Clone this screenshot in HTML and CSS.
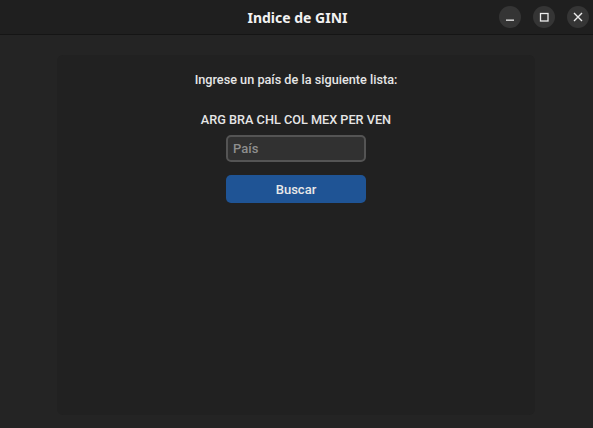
FILE: index.html
```html
<!DOCTYPE html>
<html>
<head>
<meta charset="utf-8">
<link rel="stylesheet" href="styles.css">
</head>
<body>
<div class="window">
  <header class="titlebar">
    <div class="title">Indice de GINI</div>
    <div class="controls">
      <button class="ctl" aria-label="Minimizar">
        <svg width="10" height="10" viewBox="0 0 10 10"><rect x="1" y="7.5" width="8" height="1.3" fill="#ececec"/></svg>
      </button>
      <button class="ctl" aria-label="Maximizar">
        <svg width="10" height="10" viewBox="0 0 10 10"><rect x="1.5" y="1.5" width="7.5" height="7.5" fill="none" stroke="#ececec" stroke-width="1.3"/></svg>
      </button>
      <button class="ctl" aria-label="Cerrar">
        <svg width="10" height="10" viewBox="0 0 10 10"><path d="M1 1 L9 9 M9 1 L1 9" stroke="#ececec" stroke-width="1.4"/></svg>
      </button>
    </div>
  </header>
  <main class="content">
    <section class="panel">
      <p class="prompt">Ingrese un país de la siguiente lista:</p>
      <p class="list">ARG BRA CHL COL MEX PER VEN</p>
      <input class="field" type="text" placeholder="País">
      <button class="search">Buscar</button>
    </section>
  </main>
</div>
</body>
</html>
```

FILE: styles.css
```css
html, body {
  margin: 0;
  padding: 0;
  background: #242424;
  width: 593px;
  height: 428px;
  overflow: hidden;
}

.window {
  display: flex;
  flex-direction: column;
  height: 428px;
}

.titlebar {
  height: 34px;
  background: #1f1f1f;
  border-bottom: 1px solid #151515;
  display: flex;
  align-items: center;
  justify-content: center;
  position: relative;
  flex-shrink: 0;
}

.title {
  font-family: "Noto Sans", "DejaVu Sans", sans-serif;
  font-weight: 700;
  font-size: 14px;
  color: #f2f2f2;
  margin-left: 2px;
}

.controls {
  position: absolute;
  right: 4px;
  top: 6px;
  display: flex;
  gap: 12px;
}

.ctl {
  width: 22px;
  height: 22px;
  border-radius: 50%;
  border: none;
  background: #353535;
  padding: 0;
  display: flex;
  align-items: center;
  justify-content: center;
}

.content {
  flex: 1;
  padding: 20px 58px 13px 57px;
  display: flex;
}

.panel {
  flex: 1;
  background: #212121;
  border-radius: 6px;
  display: flex;
  flex-direction: column;
  align-items: center;
  padding-top: 17px;
  font-family: Roboto, "Liberation Sans", sans-serif;
}

.prompt {
  margin: 0;
  font-size: 12.7px;
  font-weight: 500;
  color: #e6e6e6;
  line-height: 16px;
}

.list {
  margin: 24px 0 0 0;
  font-size: 12.7px;
  font-weight: 500;
  color: #e6e6e6;
  line-height: 16px;
}

.field {
  box-sizing: border-box;
  margin-top: 7px;
  width: 140px;
  height: 27px;
  background: #313131;
  border: 2px solid #545454;
  border-radius: 5px;
  padding: 0 5px;
  font-family: Roboto, "Liberation Sans", sans-serif;
  font-size: 13px;
  font-weight: 500;
  color: #e6e6e6;
  outline: none;
}

.field::placeholder {
  color: #8e8e8e;
}

.search {
  margin-top: 13px;
  width: 140px;
  height: 28px;
  background: #1f5495;
  border: none;
  border-radius: 5px;
  font-family: Roboto, "Liberation Sans", sans-serif;
  font-size: 13px;
  font-weight: 500;
  color: #e8e8e8;
}
```
